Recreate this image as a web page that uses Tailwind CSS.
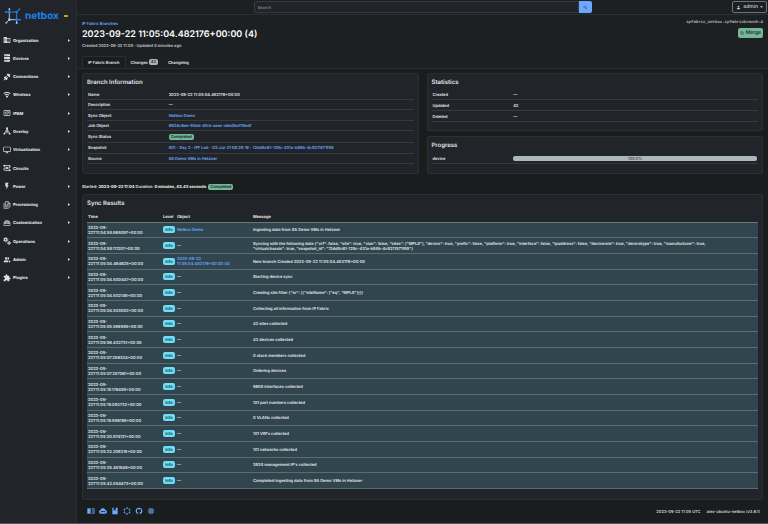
<!DOCTYPE html>
<html lang="en">
<head>
    <meta charset="UTF-8">
    <meta name="viewport" content="width=device-width, initial-scale=1.0">
    <title>2023-09-22 11:05:04.482176+00:00 (4) | NetBox</title>
    <script src="https://cdn.jsdelivr.net/npm/@tailwindcss/browser@4"></script>
</head>
<body class="bg-[#1a1d1e] font-['Inter',sans-serif] text-[4px] leading-[5px] font-semibold text-[#e4e7ea] [text-rendering:geometricPrecision]">
    <div class="flex min-h-screen border-b border-[#55595c]">
        <!-- Sidebar -->
        <aside class="w-[77px] shrink-0 bg-[#212529] border-r border-[#2b2f33]">
            <div class="flex items-center h-[31px] pl-[5px]">
                <svg class="w-4 h-4 shrink-0" viewBox="0 0 48 48" fill="none" stroke-width="3">
                    <g stroke="#9fc9f5">
                        <path d="M13 12V35M13 35H35M35 35V46M13 35L4 44" />
                    </g>
                    <g stroke="#2a7de1">
                        <path d="M13 12H35V35M35 12L43 4M13 12V3M3 12H13M35 35H46" />
                    </g>
                    <g fill="#9fc9f5">
                        <circle cx="13" cy="35" r="4" /><circle cx="4" cy="44" r="3" /><circle cx="35" cy="45" r="3" /><circle cx="13" cy="4" r="3" />
                    </g>
                    <g fill="#2a7de1">
                        <circle cx="13" cy="12" r="4" /><circle cx="35" cy="12" r="4" /><circle cx="35" cy="35" r="4" /><circle cx="43" cy="4" r="3" /><circle cx="3" cy="12" r="3" /><circle cx="45" cy="35" r="3" />
                    </g>
                </svg>
                <span class="ml-1 text-[10px] leading-[12px] font-bold text-[#1f80ea]">netbox</span>
                <span class="ml-[5px] w-[4px] h-[2px] bg-[#d39e18]"></span>
            </div>
            <nav id="sidebar-nav" class="flex flex-col justify-between h-[256px]"></nav>
        </aside>

        <div class="flex-1 min-w-0 flex flex-col">
            <!-- Top bar -->
            <header class="grid grid-cols-[1fr_338px_1fr] items-center h-[15px] px-px bg-[#1d2023] border-b border-[#2b2f33]">
                <form class="col-start-2 flex h-[12px]">
                    <input type="text" placeholder="Search" aria-label="Search" class="flex-1 min-w-0 px-[3px] bg-[#212529] border border-[#343a40] rounded-l-xs placeholder-[#7b8288] [text-rendering:geometricPrecision]">
                    <button type="button" aria-label="Search" class="flex items-center justify-center w-[13px] bg-[#6ea8fe] rounded-r-xs">
                        <svg class="w-[5px] h-[5px]" viewBox="0 0 24 24" fill="#1d2f4c"><path d="M9.5,3A6.5,6.5 0 0,1 16,9.5C16,11.11 15.41,12.59 14.44,13.73L14.71,14H15.5L20.5,19L19,20.5L14,15.5V14.71L13.73,14.44C12.59,15.41 11.11,16 9.5,16A6.5,6.5 0 0,1 3,9.5A6.5,6.5 0 0,1 9.5,3M9.5,5C7,5 5,7 5,9.5C5,12 7,14 9.5,14C12,14 14,12 14,9.5C14,7 12,5 9.5,5Z" /></svg>
                    </button>
                </form>
                <button class="justify-self-end flex items-center gap-[2px] h-[12px] px-[3px] border border-[#6c757d] rounded-xs text-[5px] font-medium text-[#cfd4d9] [text-rendering:geometricPrecision]">
                    <svg class="w-[5px] h-[5px]" viewBox="0 0 24 24" fill="currentColor"><path d="M12,4A4,4 0 0,1 16,8A4,4 0 0,1 12,12A4,4 0 0,1 8,8A4,4 0 0,1 12,4M12,14C16.42,14 20,15.79 20,18V20H4V18C4,15.79 7.58,14 12,14Z" /></svg>
                    admin
                    <svg class="w-[3px] h-[2px]" viewBox="0 0 6 3" fill="currentColor"><path d="M0 0H6L3 3Z" /></svg>
                </button>
            </header>

            <!-- Page heading -->
            <div class="flex justify-between px-[5px] pt-[6px] bg-[#1d2023]">
                <div>
                    <a href="#" class="block text-[#6ea8fe]">IP Fabric Branches</a>
                    <h1 class="mt-[2px] text-[9px] leading-[13px] font-semibold text-white">2023-09-22 11:05:04.482176+00:00 (4)</h1>
                    <p class="mt-[2px] text-[#c3c8cd]">Created 2023-09-22 11:05 · Updated 0 minutes ago</p>
                </div>
                <div class="flex flex-col items-end">
                    <code class="font-['Liberation_Mono',monospace] font-normal text-[4px]">ipfabric_netbox.ipfabricbranch:4</code>
                    <button class="flex items-center gap-[2px] h-[10px] mt-[2px] px-[2px] bg-[#75b798] rounded-xs text-[5px] font-medium text-[#17241d] [text-rendering:geometricPrecision]">
                        <svg class="w-[4px] h-[4px]" viewBox="0 0 24 24" fill="none" stroke="currentColor" stroke-width="3"><path d="M8 4H5V12A7 7 0 0 0 15 19M16 20H19V12A7 7 0 0 0 9 5" /></svg>
                        Merge
                    </button>
                </div>
            </div>

            <!-- Tabs -->
            <div class="flex pl-[5px] pt-[8px] bg-[#1d2023] border-b border-[#2b2f33]">
                <a href="#" class="-mb-px flex items-center h-[12px] px-[5px] bg-[#1a1d1e] border border-b-0 border-[#2b2f33] rounded-t-xs">IP Fabric Branch</a>
                <a href="#" class="flex items-center gap-px h-[12px] px-[5px]">Changes <span class="px-[2px] py-px bg-[#adb5bd] rounded-xs leading-[4px] text-[#212529]">42</span></a>
                <a href="#" class="flex items-center h-[12px] px-[5px]">Changelog</a>
            </div>

            <main class="px-[5px] pt-[4px]">
                <div class="grid grid-cols-2 gap-[8px]">
                    <section class="px-[4px] pt-[5px] pb-[9px] bg-[#212529] border border-[#2b2f33] rounded-xs">
                        <h2 class="text-[6px] leading-[7px] font-semibold">Branch Information</h2>
                        <table class="w-full h-[74px] mt-[4px] table-fixed text-left">
                            <tbody>
                                <tr class="border-b border-[#343a40]"><th class="w-1/4 pl-px font-semibold">Name</th><td>2023-09-22 11:05:04.482176+00:00</td></tr>
                                <tr class="border-b border-[#343a40]"><th class="pl-px font-semibold">Description</th><td>—</td></tr>
                                <tr class="border-b border-[#343a40]"><th class="pl-px font-semibold">Sync Object</th><td><a href="#" class="text-[#6ea8fe]">Netbox Demo</a></td></tr>
                                <tr class="border-b border-[#343a40]"><th class="pl-px font-semibold">Job Object</th><td><a href="#" class="text-[#6ea8fe]">6924c6ee-90eb-4fcb-aeec-dda0bcf19edf</a></td></tr>
                                <tr class="border-b border-[#343a40]"><th class="pl-px font-semibold">Sync Status</th><td><span class="block w-fit px-[2px] py-px bg-[#75b798] rounded-xs leading-[4px] text-[#17241d]">Completed</span></td></tr>
                                <tr class="border-b border-[#343a40]"><th class="pl-px font-semibold">Snapshot</th><td class="whitespace-nowrap"><a href="#" class="text-[#6ea8fe]">S01 - Day 2 - IPF Lab - 02-Jul-21 06:29:16 - 12dd8c61-129c-431a-b98b-4c9211571f89</a></td></tr>
                                <tr class="border-b border-[#343a40]"><th class="pl-px font-semibold">Source</th><td><a href="#" class="text-[#6ea8fe]">SA Demo VMs in Hetzner</a></td></tr>
                            </tbody>
                        </table>
                    </section>
                    <div class="flex flex-col gap-[5px]">
                        <section class="flex-1 px-[4px] pt-[5px] bg-[#212529] border border-[#2b2f33] rounded-xs">
                            <h2 class="text-[6px] leading-[7px] font-semibold">Statistics</h2>
                            <table class="w-full h-[32px] mt-[4px] table-fixed text-left">
                                <tbody>
                                    <tr class="border-b border-[#343a40]"><th class="w-1/4 pl-px font-semibold">Created</th><td>—</td></tr>
                                    <tr class="border-b border-[#343a40]"><th class="pl-px font-semibold">Updated</th><td>42</td></tr>
                                    <tr class="border-b border-[#343a40]"><th class="pl-px font-semibold">Deleted</th><td>—</td></tr>
                                </tbody>
                            </table>
                        </section>
                        <section class="px-[4px] pt-[5px] pb-[9px] bg-[#212529] border border-[#2b2f33] rounded-xs">
                            <h2 class="text-[6px] leading-[7px] font-semibold">Progress</h2>
                            <table class="w-full h-[11px] mt-[4px] table-fixed text-left">
                                <tbody>
                                    <tr class="border-b border-[#343a40]">
                                        <th class="w-1/4 pl-px font-semibold">device</th>
                                        <td class="pr-px"><div role="progressbar" aria-label="device" aria-valuenow="100" class="bg-[#adb5bd] rounded-xs text-center font-normal text-[#343a40]">100.0%</div></td>
                                    </tr>
                                </tbody>
                            </table>
                        </section>
                    </div>
                </div>

                <p class="flex items-center gap-[2px] h-[7px] mt-[9px] mb-[4px]">
                    <span>Started: <strong class="font-extrabold">2023-09-22 11:04</strong> Duration: <strong class="font-extrabold">0 minutes, 43.43 seconds</strong></span>
                    <span class="px-[2px] py-px bg-[#75b798] rounded-xs leading-[4px] text-[#17241d]">Completed</span>
                </p>

                <section class="px-[4px] pt-[5px] pb-[10px] bg-[#212529] border border-[#2b2f33] rounded-xs">
                    <h2 class="text-[6px] leading-[7px] font-semibold">Sync Results</h2>
                    <table class="w-full h-[278px] mt-[4px] table-fixed text-left">
                        <thead>
                            <tr class="h-[11px] border-b border-[#6c757d]">
                                <th class="w-[75px] pl-px font-bold">Time</th>
                                <th class="w-[14px] pl-px font-bold">Level</th>
                                <th class="w-[76px] pl-px font-bold">Object</th>
                                <th class="pl-px font-bold">Message</th>
                            </tr>
                        </thead>
                        <tbody id="sync-results" class="bg-[#30454e]"></tbody>
                    </table>
                </section>
            </main>

            <!-- Footer -->
            <footer class="flex-1 flex items-center justify-between pl-[10px] pr-[8px] pb-px text-[#cfd4d9]">
                <div id="footer-links" class="flex gap-[4px] text-[#6ea8fe]"></div>
                <div class="flex gap-[6px]">
                    <span>2023-09-22 11:05 UTC</span>
                    <span>alex-ubuntu-netbox (v3.6.1)</span>
                </div>
            </footer>
        </div>
    </div>

    <script>
        const menus = [
            { label: "Organization", icon: '<path d="M18,15H16V17H18M18,11H16V13H18M20,19H12V17H14V15H12V13H14V11H12V9H20M10,7H8V5H10M10,11H8V9H10M10,15H8V13H10M10,19H8V17H10M6,7H4V5H6M6,11H4V9H6M6,15H4V13H6M6,19H4V17H6M12,7V3H2V21H22V7H12Z"/>' },
            { label: "Devices", icon: '<path d="M4,1H20A1,1 0 0,1 21,2V6A1,1 0 0,1 20,7H4A1,1 0 0,1 3,6V2A1,1 0 0,1 4,1M4,9H20A1,1 0 0,1 21,10V14A1,1 0 0,1 20,15H4A1,1 0 0,1 3,14V10A1,1 0 0,1 4,9M4,17H20A1,1 0 0,1 21,18V22A1,1 0 0,1 20,23H4A1,1 0 0,1 3,22V18A1,1 0 0,1 4,17M9,5H10V3H9V5M9,13H10V11H9V13M9,21H10V19H9V21M5,3V5H7V3H5M5,11V13H7V11H5M5,19V21H7V19H5Z"/>' },
            { label: "Connections", icon: '<path d="M21.4 7.5C22.2 8.3 22.2 9.6 21.4 10.3L18.6 13.1L10.8 5.3L13.6 2.5C14.4 1.7 15.7 1.7 16.4 2.5L18.2 4.3L21.2 1.3L22.6 2.7L19.6 5.7L21.4 7.5M15.6 13.3L14.2 11.9L11.4 14.7L9.3 12.6L12.1 9.8L10.7 8.4L7.9 11.2L6.4 9.8L3.6 12.6C2.8 13.4 2.8 14.7 3.6 15.4L5.4 17.2L1.4 21.2L2.8 22.6L6.8 18.6L8.6 20.4C9.4 21.2 10.7 21.2 11.4 20.4L14.2 17.6L12.8 16.2L15.6 13.3Z"/>' },
            { label: "Wireless", icon: '<path d="M12,21L15.6,16.2C14.6,15.45 13.35,15 12,15C10.65,15 9.4,15.45 8.4,16.2L12,21M12,3C7.95,3 4.21,4.34 1.2,6.6L3,9C5.5,7.12 8.62,6 12,6C15.38,6 18.5,7.12 21,9L22.8,6.6C19.79,4.34 16.05,3 12,3M12,9C9.3,9 6.81,9.89 4.8,11.4L6.6,13.8C8.1,12.67 9.97,12 12,12C14.03,12 15.9,12.67 17.4,13.8L19.2,11.4C17.19,9.89 14.7,9 12,9Z"/>' },
            { label: "IPAM", icon: '<path d="M4,4H20A2,2 0 0,1 22,6V18A2,2 0 0,1 20,20H4A2,2 0 0,1 2,18V6A2,2 0 0,1 4,4M4,6V18H11V6H4M20,18V6H18.76C19,6.54 18.95,7.07 18.95,7.13C18.88,7.8 18.41,8.5 18.24,8.75L15.91,11.3L19.23,11.28L19.24,12.5L14.04,12.47L14,11.47C14,11.47 17.05,8.24 17.2,7.95C17.34,7.67 17.91,6 16.5,6C15.27,6.05 15.41,7.3 15.41,7.3L13.87,7.31C13.87,7.31 13.88,6.65 14.25,6H13V18H20M8.92,16H7.42V10.2L5.62,10.76V9.53L8.76,8.41H8.92V16Z"/>' },
            { label: "Overlay", icon: '<g fill="none" stroke="currentColor" stroke-width="2"><path d="M12 5L4 20M12 5L20 20M12 5V12M12 12L8 20M12 12L16 20"/></g><circle cx="12" cy="4" r="3"/><circle cx="4" cy="20" r="2.5"/><circle cx="20" cy="20" r="2.5"/><circle cx="12" cy="12" r="2"/>' },
            { label: "Virtualization", icon: '<path d="M21,16H3V4H21M21,2H3C1.89,2 1,2.89 1,4V16A2,2 0 0,0 3,18H10V20H8V22H16V20H14V18H21A2,2 0 0,0 23,16V4C23,2.89 22.1,2 21,2Z"/>' },
            { label: "Circuits", icon: '<g fill="none" stroke="currentColor" stroke-width="2.5"><path d="M6 5H18A3 3 0 0 1 18 12H6A3 3 0 0 0 6 19H18"/></g><circle cx="4" cy="5" r="3"/><circle cx="20" cy="19" r="3"/><circle cx="12" cy="12" r="3"/><circle cx="20" cy="5" r="2"/>' },
            { label: "Power", icon: '<path d="M7,2V13H10V22L17,10H13L17,2H7Z"/>' },
            { label: "Provisioning", icon: '<g fill="none" stroke="currentColor" stroke-width="2"><path d="M7 2H16L21 7V18H7ZM15 2V8H21M3 6V22H17M10 11H18M10 14H16"/></g>' },
            { label: "Customization", icon: '<path fill-rule="evenodd" d="M9 3H15L17 5V7H19L22 10V20H2V10L5 7H7V5ZM9 5V7H15V5ZM4 11V13H7V11ZM9 11V13H15V11ZM17 11V13H20V11ZM4 15V18H20V15Z" opacity=".8"/>' },
            { label: "Operations", icon: '<g fill="none" stroke="currentColor"><circle cx="8" cy="8" r="4" stroke-width="3.5"/><circle cx="8" cy="8" r="6.5" stroke-width="2" stroke-dasharray="3.4 3.4"/><circle cx="18" cy="18" r="3" stroke-width="3"/><circle cx="18" cy="18" r="5" stroke-width="2" stroke-dasharray="2.6 2.6"/></g>' },
            { label: "Admin", icon: '<path d="M16 17V19H2V17S2 13 9 13 16 17 16 17M12.5 7.5A3.5 3.5 0 1 0 9 11A3.5 3.5 0 0 0 12.5 7.5M15.94 13A5.32 5.32 0 0 1 18 17V19H22V17S22 13.37 15.94 13M15 4A3.39 3.39 0 0 0 13.07 4.59A5 5 0 0 1 13.07 10.41A3.39 3.39 0 0 0 15 11A3.5 3.5 0 0 0 15 4Z"/>' },
            { label: "Plugins", icon: '<path d="M20.5,11H19V7C19,5.89 18.1,5 17,5H13V3.5A2.5,2.5 0 0,0 10.5,1A2.5,2.5 0 0,0 8,3.5V5H4A2,2 0 0,0 2,7V10.8H3.5C5,10.8 6.2,12 6.2,13.5C6.2,15 5,16.2 3.5,16.2H2V20A2,2 0 0,0 4,22H7.8V20.5C7.8,19 9,17.8 10.5,17.8C12,17.8 13.2,19 13.2,20.5V22H17A2,2 0 0,0 19,20V16H20.5A2.5,2.5 0 0,0 23,13.5A2.5,2.5 0 0,0 20.5,11Z"/>' }
        ];

        const results = [
            { time: "22T11:04:58.868097+00:00", object: "Netbox Demo", message: "Ingesting data from SA Demo VMs in Hetzner" },
            { time: "22T11:04:59.111207+00:00", message: 'Syncing with the following data {"vrf": false, "site": true, "vlan": false, "sites": ["MPLS"], "device": true, "prefix": false, "platform": true, "interface": false, "ipaddress": false, "devicerole": true, "devicetype": true, "manufacturer": true, "virtualchassis": true, "snapshot_id": "12dd8c61-129c-431a-b98b-4c9211571f89"}' },
            { time: "22T11:05:04.494625+00:00", object: "2023-09-22 11:05:04.482176+00:00 (4)", message: "New branch Created 2023-09-22 11:05:04.482176+00:00" },
            { time: "22T11:05:04.500447+00:00", message: "Starting device sync" },
            { time: "22T11:05:04.502149+00:00", message: 'Creating site filter {"or": [{"siteName": ["eq", "MPLS"]}]}' },
            { time: "22T11:05:04.503082+00:00", message: "Collecting all information from IP Fabric" },
            { time: "22T11:05:05.586595+00:00", message: "42 sites collected" },
            { time: "22T11:05:06.432731+00:00", message: "42 devices collected" },
            { time: "22T11:05:07.286324+00:00", message: "0 stack members collected" },
            { time: "22T11:05:07.287061+00:00", message: "Ordering devices" },
            { time: "22T11:05:18.176488+00:00", message: "9608 interfaces collected" },
            { time: "22T11:05:19.092732+00:00", message: "101 part numbers collected" },
            { time: "22T11:05:19.986198+00:00", message: "0 VLANs collected" },
            { time: "22T11:05:20.874131+00:00", message: "101 VRFs collected" },
            { time: "22T11:05:22.209218+00:00", message: "101 networks collected" },
            { time: "22T11:05:25.451946+00:00", message: "3938 management IP's collected" },
            { time: "22T11:05:42.054473+00:00", message: "Completed ingesting data from SA Demo VMs in Hetzner" }
        ];

        const footerLinks = [
            { label: "Docs", icon: '<path d="M1 4H11V20H1Z"/><path fill="none" stroke="currentColor" stroke-width="2" d="M13 5H22V19H13M15 9H20M15 12H20M15 15H20"/>' },
            { label: "REST API", icon: '<path fill-rule="evenodd" d="M19.35,10.04C18.67,6.59 15.64,4 12,4C9.11,4 6.6,5.64 5.35,8.04C2.34,8.36 0,10.91 0,14A6,6 0 0,0 6,20H19A5,5 0 0,0 24,15C24,12.36 21.95,10.22 19.35,10.04ZM8 11L5 14L8 17V15H16V17L19 14L16 11V13H8Z"/>' },
            { label: "REST API documentation", icon: '<path fill-rule="evenodd" d="M4 2H20V22H4ZM8 2V11L11 9L14 11V2Z"/>' },
            { label: "GraphQL API", icon: '<path fill="none" stroke="currentColor" stroke-width="1.5" d="M12 3L20 7.5V16.5L12 21L4 16.5V7.5Z"/><circle cx="12" cy="3" r="2"/><circle cx="20" cy="7.5" r="2"/><circle cx="20" cy="16.5" r="2"/><circle cx="12" cy="21" r="2"/><circle cx="4" cy="16.5" r="2"/><circle cx="4" cy="7.5" r="2"/>' },
            { label: "Source Code", icon: '<path d="M12,2A10,10 0 0,0 2,12C2,16.42 4.87,20.17 8.84,21.5C9.34,21.58 9.5,21.27 9.5,21C9.5,20.77 9.5,20.14 9.5,19.31C6.73,19.91 6.14,17.97 6.14,17.97C5.68,16.81 5.03,16.5 5.03,16.5C4.12,15.88 5.1,15.9 5.1,15.9C6.1,15.97 6.63,16.93 6.63,16.93C7.5,18.45 8.97,18 9.54,17.76C9.63,17.11 9.89,16.67 10.17,16.42C7.95,16.17 5.62,15.31 5.62,11.5C5.62,10.39 6,9.5 6.65,8.79C6.55,8.54 6.2,7.5 6.75,6.15C6.75,6.15 7.59,5.88 9.5,7.17C10.29,6.95 11.15,6.84 12,6.84C12.85,6.84 13.71,6.95 14.5,7.17C16.41,5.88 17.25,6.15 17.25,6.15C17.8,7.5 17.45,8.54 17.35,8.79C18,9.5 18.38,10.39 18.38,11.5C18.38,15.32 16.04,16.16 13.81,16.41C14.17,16.72 14.5,17.33 14.5,18.26C14.5,19.6 14.5,20.68 14.5,21C14.5,21.27 14.66,21.59 15.17,21.5C19.14,20.16 22,16.42 22,12A10,10 0 0,0 12,2Z"/>' },
            { label: "NetDev Slack", icon: '<g fill="none" stroke="currentColor" stroke-width="3" stroke-linecap="round"><path d="M9 4V12M15 12V20M4 15H12M12 9H20M9 18V20M15 4V6M4 9H6M18 15H20"/></g>' }
        ];

        document.getElementById('sidebar-nav').innerHTML = menus.map(menu => `
            <button class="flex items-center w-full h-[18px] pl-[3px] pr-[6px] font-extrabold text-[#dee2e6] [text-rendering:geometricPrecision]">
                <svg class="w-[8px] h-[8px] shrink-0" viewBox="0 0 24 24" fill="currentColor" aria-hidden="true">${menu.icon}</svg>
                <span class="ml-[2px] flex-1 text-left">${menu.label}</span>
                <svg class="w-[2px] h-[3px]" viewBox="0 0 4 6" fill="currentColor" aria-hidden="true"><path d="M0 0L4 3L0 6Z"/></svg>
            </button>
        `).join('');

        document.getElementById('sync-results').innerHTML = results.map(row => `
            <tr class="border-b border-[#5c6c73]">
                <td class="pl-px">2023-09-<br>${row.time}</td>
                <td class="pl-px"><span class="flex items-center justify-center w-[12px] h-[7px] bg-[#6edff6] rounded-xs text-[#173c44]">Info</span></td>
                <td class="pl-px pr-4">${row.object ? `<a href="#" class="text-[#6ea8fe]">${row.object}</a>` : '—'}</td>
                <td class="pl-px pr-5">${row.message}</td>
            </tr>
        `).join('');

        document.getElementById('footer-links').innerHTML = footerLinks.map(link => `
            <a href="#" aria-label="${link.label}"><svg class="w-[8px] h-[8px]" viewBox="0 0 24 24" fill="currentColor">${link.icon}</svg></a>
        `).join('');
    </script>
</body>
</html>
